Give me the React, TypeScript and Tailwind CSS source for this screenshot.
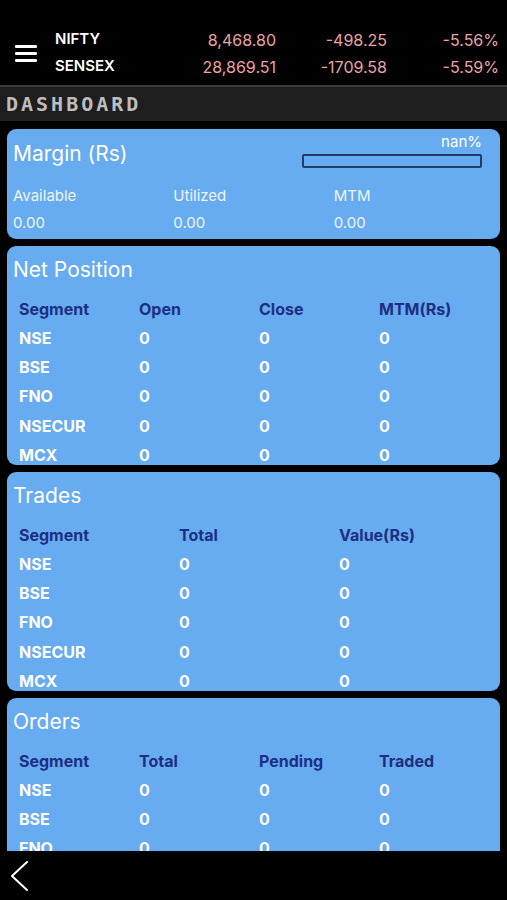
import React from 'react';

const tickers = [
  { name: 'NIFTY', value: '8,468.80', change: '-498.25', pct: '-5.56%' },
  { name: 'SENSEX', value: '28,869.51', change: '-1709.58', pct: '-5.59%' },
];

const segments = ['NSE', 'BSE', 'FNO', 'NSECUR', 'MCX'];

function Card({ title, cols, columns, heightClass }: { title: string; cols: string[]; columns: 3 | 4; heightClass: string }) {
  const grid = columns === 4 ? 'grid grid-cols-[repeat(4,120px)]' : 'grid grid-cols-[repeat(3,160px)]';
  return (
    <div className={`shrink-0 rounded-[9px] bg-[#67abf0] overflow-hidden pt-[12px] ${heightClass}`}>
      <div className="px-[6px] text-[21px] leading-[24px] text-white">{title}</div>
      <div className="mt-[12px] pl-[12px]">
        <div className={`${grid} h-[29px] items-center text-[16px] font-bold text-[#1d2f80]`}>
          {cols.map(c => (
            <div key={c}>{c}</div>
          ))}
        </div>
        {segments.map(s => (
          <div key={s} className={`${grid} h-[29.3px] items-center text-[16px] font-bold text-white`}>
            <div>{s}</div>
            {cols.slice(1).map(c => (
              <div key={c}>0</div>
            ))}
          </div>
        ))}
      </div>
    </div>
  );
}

export default function App() {
  return (
    <div className="w-[507px] h-[900px] bg-black flex flex-col overflow-hidden font-['Inter',sans-serif]">
      {/* ticker header */}
      <div className="h-[85px] shrink-0 flex items-start pt-[26px]">
        <div className="w-[55px] h-[54px] flex items-center pl-[15px]">
          <div className="flex flex-col gap-[4px]">
            <div className="w-[22px] h-[3px] bg-white rounded-[1px]" />
            <div className="w-[22px] h-[3px] bg-white rounded-[1px]" />
            <div className="w-[22px] h-[3px] bg-white rounded-[1px]" />
          </div>
        </div>
        <div className="flex flex-col">
          {tickers.map(t => (
            <div key={t.name} className="flex h-[27px] items-center text-[16px]">
              <div className="w-[120px] text-[15px] font-semibold text-white">{t.name}</div>
              <div className="w-[101px] text-right text-[#eca3a3]">{t.value}</div>
              <div className="w-[111px] text-right text-[#eca3a3]">{t.change}</div>
              <div className="w-[112px] text-right text-[#eca3a3]">{t.pct}</div>
            </div>
          ))}
        </div>
      </div>
      <div className="h-[2px] shrink-0 bg-[#3a3a3a]" />
      <div className="h-[34px] shrink-0 bg-[#1e1e1e] flex items-center pl-[6px]">
        <span className="font-['DejaVu_Sans_Mono',monospace] font-bold text-[20px] tracking-[3px] text-[#bdbdbd]">DASHBOARD</span>
      </div>

      {/* cards */}
      <div className="flex-1 min-h-0 overflow-hidden flex flex-col gap-[7px] px-[7px] pt-[8px]">
        <div className="shrink-0 h-[110px] rounded-[9px] bg-[#67abf0] px-[6px] pt-[4px]">
          <div className="flex items-start justify-between pr-[12px]">
            <div className="mt-[9px] text-[21px] leading-[24px] text-white">Margin (Rs)</div>
            <div className="w-[180px] flex flex-col">
              <div className="text-right text-[15px] leading-[18px] text-white">nan%</div>
              <div className="mt-[3px] h-[14px] rounded-[2px] border-2 border-[#1f3d66]" />
            </div>
          </div>
          <div className="mt-[14px] grid grid-cols-3 text-[15px] text-[#eef5ff]">
            <div className="leading-[27px]">Available</div>
            <div className="leading-[27px]">Utilized</div>
            <div className="leading-[27px]">MTM</div>
            <div className="leading-[27px]">0.00</div>
            <div className="leading-[27px]">0.00</div>
            <div className="leading-[27px]">0.00</div>
          </div>
        </div>
        <Card title="Net Position" cols={['Segment', 'Open', 'Close', 'MTM(Rs)']} columns={4} heightClass="h-[219px]" />
        <Card title="Trades" cols={['Segment', 'Total', 'Value(Rs)']} columns={3} heightClass="h-[219px]" />
        <Card title="Orders" cols={['Segment', 'Total', 'Pending', 'Traded']} columns={4} heightClass="h-[219px]" />
      </div>

      {/* bottom bar */}
      <div className="h-[49px] shrink-0 bg-black flex items-center pl-[10px]">
        <svg width="20" height="32" viewBox="0 0 20 32" fill="none">
          <polyline points="17,2 2,16 17,30" stroke="white" strokeWidth="2" strokeLinecap="round" strokeLinejoin="round" />
        </svg>
      </div>
    </div>
  );
}
